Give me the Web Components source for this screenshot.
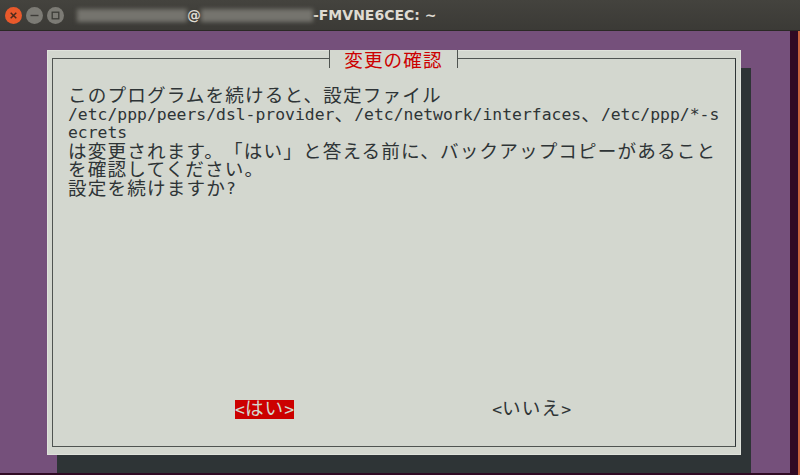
<!DOCTYPE html>
<html lang="ja">
<head>
<meta charset="utf-8">
<title>変更の確認</title>
<style>
  html, body { margin: 0; height: 100%; background: #300a24; }
  body { width: 800px; height: 475px; overflow: hidden; }
</style>
</head>
<body>
<term-window>
  <span slot="title"><blur-mask width="110"></blur-mask>@<blur-mask width="112"></blur-mask>-FMVNE6CEC: ~</span>
  <config-dialog heading="変更の確認">
    <tty-line>このプログラムを続けると、設定ファイル</tty-line>
    <tty-line>/etc/ppp/peers/dsl-provider、/etc/network/interfaces、/etc/ppp/*-s</tty-line>
    <tty-line>ecrets</tty-line>
    <tty-line>は変更されます。「はい」と答える前に、バックアップコピーがあること</tty-line>
    <tty-line>を確認してください。</tty-line>
    <tty-line>設定を続けますか?</tty-line>
    <dialog-button slot="buttons" active>&lt;はい&gt;</dialog-button>
    <dialog-button slot="buttons">&lt;いいえ&gt;</dialog-button>
  </config-dialog>
</term-window>

<script>
const MONO = '"DejaVu Sans Mono", "Noto Sans CJK JP", monospace';
const CELL_STYLES = `
  .row { white-space: pre; }
  .wide { font: 18.6px/0 "Noto Sans CJK JP", sans-serif; letter-spacing: 1.14px; text-spacing-trim: space-all; }
`;

// terminal cells: full-width runs take two cells, so they get their own size
function ttyRuns(text) {
  const runs = text.trim().replace(/&/g, '&amp;').replace(/</g, '&lt;')
    .replace(/[\u3000-\u9fff\uff00-\uffef]+/g, (run) => `<span class="wide">${run}</span>`);
  return `<div class="row">${runs}</div>`;
}

// the smudged-out user and host names in the title bar
class BlurMask extends HTMLElement {
  connectedCallback() {
    this.attachShadow({ mode: 'open' }).innerHTML = `
      <style>
        :host { display: inline-block; height: 13px; width: ${this.getAttribute('width')}px;
                background: #75746e; filter: blur(2px); vertical-align: -2px; }
      </style>`;
  }
}

class TermWindow extends HTMLElement {
  constructor() {
    super();
    this.attachShadow({ mode: 'open' }).innerHTML = `
      <style>
        :host { display: flex; flex-direction: column; width: 800px; height: 475px; }
        .bar { flex: none; height: 31px; display: flex; align-items: center; box-sizing: border-box;
               background: linear-gradient(#44433e, #3b3a36); border-bottom: 1px solid #2a2925; }
        .btns { display: flex; gap: 4px; padding-left: 5px; }
        .btn { width: 17px; height: 17px; display: block; }
        .title { margin-left: 13px; font: bold 14px "DejaVu Sans", sans-serif; color: #dfdbd2; white-space: nowrap; }
        .body { flex: 1; min-height: 0; box-sizing: border-box; background: #300a24; border-right: 2px solid #c9653f; }
        .screen { width: 790px; height: 442px; overflow: hidden; background: #75507b; }
      </style>
      <div class="bar">
        <div class="btns">
          <svg class="btn" viewBox="0 0 17 17"><circle cx="8.5" cy="8.5" r="8.5" fill="#e9592b"/><path d="M5.7 5.7l5.6 5.6M11.3 5.7l-5.6 5.6" stroke="#4a2a1c" stroke-width="1.5"/></svg>
          <svg class="btn" viewBox="0 0 17 17"><circle cx="8.5" cy="8.5" r="8.5" fill="#7c7b75"/><path d="M4.5 8.5h8" stroke="#3d3c38" stroke-width="1.4"/></svg>
          <svg class="btn" viewBox="0 0 17 17"><circle cx="8.5" cy="8.5" r="8.5" fill="#7c7b75"/><rect x="5.2" y="5.2" width="6.6" height="6.6" fill="none" stroke="#3d3c38" stroke-width="1.3"/></svg>
        </div>
        <div class="title"><slot name="title"></slot></div>
      </div>
      <div class="body"><div class="screen"><slot></slot></div></div>`;
  }
}

class ConfigDialog extends HTMLElement {
  connectedCallback() {
    this.attachShadow({ mode: 'open' }).innerHTML = `
      <style>
        :host { display: block; box-sizing: border-box; width: 694px; height: 405px; margin: 19px 0 0 47px;
                padding: 8px 5px; background: #d3d7cf; box-shadow: 10px 18px 0 #2e3436;
                outline: 1px solid #dfe2db; outline-offset: -1px; }
        .frame { position: relative; box-sizing: border-box; height: 100%; display: flex; flex-direction: column;
                 border: 1px solid #4f5451; border-right-color: #2e3436; padding: 28px 0 0 15px;
                 font: 16.4px/18.6px ${MONO}; color: #2e3436; }
        .legend { position: absolute; left: 276px; top: -9px; width: 129px; height: 18px; box-sizing: border-box;
                  background: #d3d7cf; border: solid #4f5451; border-width: 0 1px; text-align: center;
                  font: 18.6px/18px "Noto Sans CJK JP", sans-serif; letter-spacing: 1.14px; color: #cc0000; }
        .text { flex: 1; }
        .buttons { display: flex; flex: none; padding: 0 0 27px 167px; gap: 198px; }
      </style>
      <div class="frame">
        <div class="legend">${this.getAttribute('heading')}</div>
        <div class="text"><slot></slot></div>
        <div class="buttons"><slot name="buttons"></slot></div>
      </div>`;
  }
}

class TtyLine extends HTMLElement {
  connectedCallback() {
    this.attachShadow({ mode: 'open' }).innerHTML = `
      <style>
        :host { display: block; height: 18.6px; }
        ${CELL_STYLES}
        .wide { vertical-align: -1px; }
      </style>${ttyRuns(this.textContent)}`;
  }
}

class DialogButton extends HTMLElement {
  connectedCallback() {
    this.attachShadow({ mode: 'open' }).innerHTML = `
      <style>
        :host { display: block; height: 18.6px; color: #2e3436; }
        :host([active]) { background: #cc0000; color: #d3d7cf; }
        ${CELL_STYLES}
        .row { line-height: 20.6px; height: 18.6px; }
      </style>${ttyRuns(this.textContent)}`;
  }
}

customElements.define('blur-mask', BlurMask);
customElements.define('term-window', TermWindow);
customElements.define('config-dialog', ConfigDialog);
customElements.define('tty-line', TtyLine);
customElements.define('dialog-button', DialogButton);
</script>
</body>
</html>
